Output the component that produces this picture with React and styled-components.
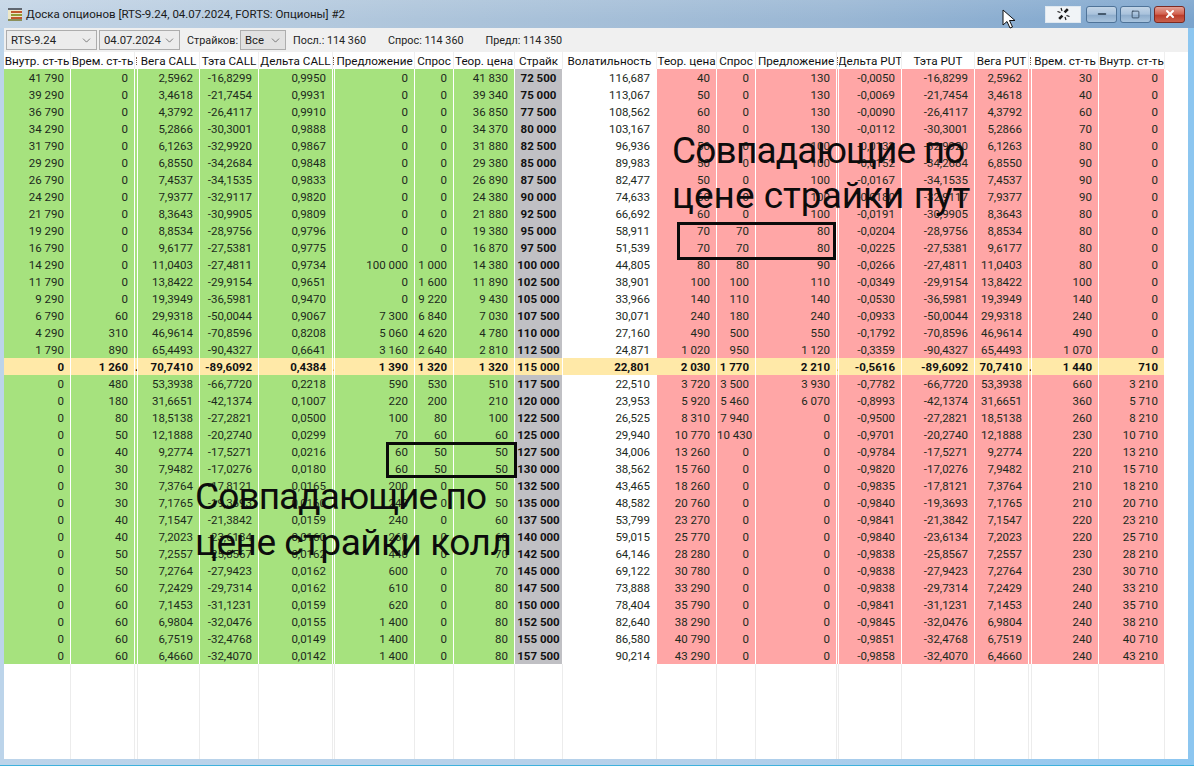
import React from 'react'
import styled, { createGlobalStyle } from 'styled-components'
import { ChevronDown, Minus, Square, X } from 'lucide-react'

const GlobalStyle = createGlobalStyle`
  html, body {
    margin: 0;
    padding: 0;
    overflow: hidden;
    background: #b9d3ea;
  }
  * {
    box-sizing: border-box;
  }
`

const COLUMNS =
  '67px 64px 3px 62px 59px 74px 2px 80px 39px 61px 48px 94px 60px 39px 81px 2px 63px 73px 54px 3px 67px 66px'

const RAW = `41 790|0|2,5962|-16,8299|0,9950|0|0|41 830|72 500|116,687|40|0|130|-0,0050|30|0
39 290|0|3,4618|-21,7454|0,9931|0|0|39 340|75 000|113,067|50|0|130|-0,0069|40|0
36 790|0|4,3792|-26,4117|0,9910|0|0|36 850|77 500|108,562|60|0|130|-0,0090|60|0
34 290|0|5,2866|-30,3001|0,9888|0|0|34 370|80 000|103,167|80|0|130|-0,0112|70|0
31 790|0|6,1263|-32,9920|0,9867|0|0|31 880|82 500|96,936|50|0|100|-0,0133|80|0
29 290|0|6,8550|-34,2684|0,9848|0|0|29 380|85 000|89,983|50|0|100|-0,0152|90|0
26 790|0|7,4537|-34,1535|0,9833|0|0|26 890|87 500|82,477|50|0|100|-0,0167|90|0
24 290|0|7,9377|-32,9117|0,9820|0|0|24 380|90 000|74,633|60|0|100|-0,0180|90|0
21 790|0|8,3643|-30,9905|0,9809|0|0|21 880|92 500|66,692|60|0|100|-0,0191|80|0
19 290|0|8,8534|-28,9756|0,9796|0|0|19 380|95 000|58,911|70|70|80|-0,0204|80|0
16 790|0|9,6177|-27,5381|0,9775|0|0|16 870|97 500|51,539|70|70|80|-0,0225|80|0
14 290|0|11,0403|-27,4811|0,9734|100 000|1 000|14 380|100 000|44,805|80|80|90|-0,0266|80|0
11 790|0|13,8422|-29,9154|0,9651|0|1 600|11 890|102 500|38,901|100|100|110|-0,0349|100|0
9 290|0|19,3949|-36,5981|0,9470|0|9 220|9 430|105 000|33,966|140|110|140|-0,0530|140|0
6 790|60|29,9318|-50,0044|0,9067|7 300|6 840|7 030|107 500|30,071|240|180|240|-0,0933|240|0
4 290|310|46,9614|-70,8596|0,8208|5 060|4 620|4 780|110 000|27,160|490|500|550|-0,1792|490|0
1 790|890|65,4493|-90,4327|0,6641|3 160|2 640|2 810|112 500|24,871|1 020|950|1 120|-0,3359|1 070|0
0|1 260|70,7410|-89,6092|0,4384|1 390|1 320|1 320|115 000|22,801|2 030|1 770|2 210|-0,5616|1 440|710
0|480|53,3938|-66,7720|0,2218|590|530|510|117 500|22,510|3 720|3 500|3 930|-0,7782|660|3 210
0|180|31,6651|-42,1374|0,1007|220|200|210|120 000|23,953|5 920|5 460|6 070|-0,8993|360|5 710
0|80|18,5138|-27,2821|0,0500|100|80|100|122 500|26,525|8 310|7 940|0|-0,9500|260|8 210
0|50|12,1888|-20,2740|0,0299|70|60|60|125 000|29,940|10 770|10 430|0|-0,9701|230|10 710
0|40|9,2774|-17,5271|0,0216|60|50|50|127 500|34,006|13 260|0|0|-0,9784|220|13 210
0|30|7,9482|-17,0276|0,0180|60|50|50|130 000|38,562|15 760|0|0|-0,9820|210|15 710
0|30|7,3764|-17,8121|0,0165|200|0|50|132 500|43,465|18 260|0|0|-0,9835|210|18 210
0|30|7,1765|-19,3693|0,0160|240|0|50|135 000|48,582|20 760|0|0|-0,9840|210|20 710
0|40|7,1547|-21,3842|0,0159|240|0|60|137 500|53,799|23 270|0|0|-0,9841|220|23 210
0|40|7,2023|-23,6134|0,0160|260|0|60|140 000|59,015|25 770|0|0|-0,9840|220|25 710
0|50|7,2557|-25,8567|0,0162|440|0|70|142 500|64,146|28 280|0|0|-0,9838|230|28 210
0|50|7,2764|-27,9423|0,0162|600|0|70|145 000|69,122|30 780|0|0|-0,9838|230|30 710
0|60|7,2429|-29,7314|0,0162|610|0|80|147 500|73,888|33 290|0|0|-0,9838|240|33 210
0|60|7,1453|-31,1231|0,0159|620|0|80|150 000|78,404|35 790|0|0|-0,9841|240|35 710
0|60|6,9804|-32,0476|0,0155|1 400|0|80|152 500|82,640|38 290|0|0|-0,9845|240|38 210
0|60|6,7519|-32,4768|0,0149|1 400|0|80|155 000|86,580|40 790|0|0|-0,9851|240|40 710
0|60|6,4660|-32,4070|0,0142|1 400|0|80|157 500|90,214|43 290|0|0|-0,9858|240|43 210`

const rows = RAW.split('\n').map((line) => line.split('|'))

// null marks the squeezed columns, they only show a sliver of their title
const HEADERS = [
  'Внутр. ст-ть', 'Врем. ст-ть', null, 'Вега CALL', 'Тэта CALL', 'Дельта CALL', null,
  'Предложение', 'Спрос', 'Теор. цена', 'Страйк', 'Волатильность', 'Теор. цена', 'Спрос',
  'Предложение', null, 'Дельта PUT', 'Тэта PUT', 'Вега PUT', null, 'Врем. ст-ть', 'Внутр. ст-ть',
]

const tones = {
  call: '#a6e27e',
  put: '#ffa6a6',
  strike: '#c0c0c4',
  atm: '#ffe9a8',
  plain: '#ffffff',
}

const Window = styled.div`
  position: relative;
  width: 1194px;
  height: 766px;
  display: flex;
  flex-direction: column;
  padding: 0 6px 6px 4px;
  font-family: Roboto, 'Liberation Sans', sans-serif;
  font-size: 11.5px;
  color: #111;
  background: linear-gradient(to right, #bcd4ea 0%, #b4d0ea 60%, #8cc6f0 100%);
  border-bottom: 1px solid #3fb1dc;
`

const TitleBar = styled.div`
  flex: 0 0 28px;
  margin: 0 -6px 0 -4px;
  padding: 0 9px 0 8px;
  display: flex;
  align-items: center;
  background:
    linear-gradient(to bottom, rgba(255, 255, 255, 0.1), rgba(255, 255, 255, 0) 70%),
    linear-gradient(to right, #c4d5e6 0%, #aec5db 35%, #9ab7d4 70%, #7ba4cd 100%);
`

const AppIcon = styled.svg`
  flex: none;
  width: 14px;
  height: 13px;
  margin-right: 4px;
`

const Title = styled.span`
  font-size: 11.5px;
  color: #1a1a1a;
  white-space: nowrap;
`

const Spacer = styled.div`
  flex: 1;
`

const PinButton = styled.div`
  width: 36px;
  height: 17px;
  margin-right: 5px;
  display: flex;
  align-items: center;
  justify-content: center;
  background: #f1f4f7;
  border: 1px solid #dfe8f0;
  color: #1a1a1a;
`

const CaptionButton = styled.div`
  width: 31px;
  height: 17px;
  margin-left: ${(p) => p.$gap}px;
  display: flex;
  align-items: center;
  justify-content: center;
  border: 1px solid ${(p) => (p.$close ? '#7c2a22' : '#4f7398')};
  border-radius: 3px;
  color: ${(p) => (p.$close ? '#fff' : '#26384b')};
  background: ${(p) =>
    p.$close
      ? 'linear-gradient(to bottom, #e2a196 0%, #d2614f 48%, #bb3c2a 55%, #c9604c 100%)'
      : 'linear-gradient(to bottom, #c3d5e7 0%, #a9c2dc 48%, #8fadcc 55%, #a9c4de 100%)'};
`

const Client = styled.div`
  flex: 1;
  display: flex;
  flex-direction: column;
  background: #fff;
  min-height: 0;
`

const Toolbar = styled.div`
  flex: 0 0 24px;
  display: flex;
  align-items: center;
  padding: 0 0 0 2px;
  background: #f0f0f0;
`

const Combo = styled.div`
  width: ${(p) => p.$width}px;
  height: 20px;
  margin-left: ${(p) => p.$left || 0}px;
  padding: 0 3px 0 4px;
  display: flex;
  align-items: center;
  justify-content: space-between;
  font-size: 11.3px;
  color: #222;
  background: ${(p) => (p.$pressed ? '#e1e1e1' : '#ececec')};
  border: 1px solid #adadad;
`

const Label = styled.span`
  margin-left: ${(p) => p.$left}px;
  white-space: nowrap;
  font-size: 10.8px;
  color: #222;
`

const Row = styled.div`
  display: grid;
  grid-template-columns: ${COLUMNS};
  height: ${(p) => p.$height}px;
`

const HeaderCell = styled.div`
  overflow: hidden;
  white-space: nowrap;
  display: flex;
  align-items: center;
  justify-content: center;
  font-size: 11.7px;
  color: #111;
  background: #fff;
  border-right: 1px solid #efefef;
`

const HeaderSliver = styled.div`
  display: flex;
  justify-content: center;
  align-items: center;
  background: #fff;
  &::after {
    content: '';
    width: 1px;
    height: 8px;
    border-left: 1px dotted #7a5a48;
  }
`

const Cell = styled.div`
  overflow: hidden;
  white-space: nowrap;
  line-height: 18px;
  text-align: ${(p) => (p.$center ? 'center' : 'right')};
  padding-right: ${(p) => (p.$center || p.$narrow ? 0 : 6)}px;
  font-weight: ${(p) => (p.$bold ? 700 : 400)};
  color: ${(p) => (p.$bold ? '#111' : '#1c2a1c')};
  background: ${(p) => tones[p.$tone]};
  border-right: 1px solid ${(p) => (p.$plain ? 'transparent' : '#fff')};
`

const EmptyCell = styled.div`
  border-right: 1px solid #ececec;
`

const Frame = styled.div`
  position: absolute;
  left: ${(p) => p.$x}px;
  top: ${(p) => p.$y}px;
  width: ${(p) => p.$w}px;
  height: ${(p) => p.$h}px;
  border: 3px solid #0a0a0a;
`

const Note = styled.div`
  position: absolute;
  left: ${(p) => p.$x}px;
  top: ${(p) => p.$y}px;
  font-size: 37px;
  line-height: ${(p) => p.$lh}px;
  color: #0c0c0c;
  white-space: nowrap;
`

const NoteLine = styled.div`
  letter-spacing: ${(p) => p.$track}px;
`

const Cursor = styled.svg`
  position: absolute;
  left: 1002px;
  top: 9px;
  width: 15px;
  height: 20px;
`

const BrokenLink = () => (
  <svg width='15' height='14' viewBox='0 0 15 14' fill='none' stroke='currentColor'>
    <path d='M3.2 11.8 L6.4 8.6' strokeWidth='2.6' />
    <path d='M8.6 5.4 L11.8 2.2' strokeWidth='2.6' />
    <path d='M5 1 L6 4 M1.5 4.5 L4.5 5.5 M13.5 9.5 L10.5 8.5 M10 13 L9 10' strokeWidth='1.2' />
  </svg>
)

const DataRow = ({ values, index }) => {
  const [intr, time, vega, theta, delta, offer, bid, theor, strike, vol, pTheor, pBid, pOffer, pDelta, pTime, pIntr] =
    values
  const atm = index === 17
  const call = atm ? 'atm' : 'call'
  const put = atm ? 'atm' : 'put'
  const gap = atm ? '.' : ''
  return (
    <Row $height={17}>
      <Cell $tone={call} $bold={atm}>{intr}</Cell>
      <Cell $tone={call} $bold={atm}>{time}</Cell>
      <Cell $tone={call} $narrow $bold={atm}>{gap}</Cell>
      <Cell $tone={call} $bold={atm}>{vega}</Cell>
      <Cell $tone={call} $bold={atm}>{theta}</Cell>
      <Cell $tone={call} $bold={atm}>{delta}</Cell>
      <Cell $tone={call} $narrow $bold={atm}>{gap}</Cell>
      <Cell $tone={call} $bold={atm}>{offer}</Cell>
      <Cell $tone={call} $bold={atm}>{bid}</Cell>
      <Cell $tone={call} $bold={atm}>{theor}</Cell>
      <Cell $tone={atm ? 'atm' : 'strike'} $center $bold>{strike}</Cell>
      <Cell $tone={atm ? 'atm' : 'plain'} $plain $bold={atm}>{vol}</Cell>
      <Cell $tone={put} $bold={atm}>{pTheor}</Cell>
      <Cell $tone={put} $bold={atm}>{pBid}</Cell>
      <Cell $tone={put} $bold={atm}>{pOffer}</Cell>
      <Cell $tone={put} $narrow $bold={atm}>{gap}</Cell>
      <Cell $tone={put} $bold={atm}>{pDelta}</Cell>
      <Cell $tone={put} $bold={atm}>{theta}</Cell>
      <Cell $tone={put} $bold={atm}>{vega}</Cell>
      <Cell $tone={put} $narrow $bold={atm}>{gap}</Cell>
      <Cell $tone={put} $bold={atm}>{pTime}</Cell>
      <Cell $tone={put} $bold={atm}>{pIntr}</Cell>
    </Row>
  )
}

const App = () => {
  return (
    <Window>
      <GlobalStyle />
      <TitleBar>
        <AppIcon viewBox='0 0 14 13'>
          <rect x='0' y='0' width='14' height='13' fill='#eee8c8' />
          <rect x='0' y='0' width='14' height='2' fill='#5f6670' />
          <rect x='3' y='3' width='11' height='2' fill='#c0562f' />
          <rect x='3' y='6' width='11' height='2' fill='#8f9a35' />
          <rect x='3' y='9' width='11' height='2' fill='#c0562f' />
          <rect x='0' y='11' width='14' height='2' fill='#8b8f5a' />
        </AppIcon>
        <Title>Доска опционов [RTS-9.24, 04.07.2024, FORTS: Опционы] #2</Title>
        <Spacer />
        <PinButton>
          <BrokenLink />
        </PinButton>
        <CaptionButton $gap={0}>
          <Minus size={12} strokeWidth={3} />
        </CaptionButton>
        <CaptionButton $gap={3}>
          <Square size={9} strokeWidth={2} />
        </CaptionButton>
        <CaptionButton $gap={3} $close>
          <X size={12} strokeWidth={4} />
        </CaptionButton>
      </TitleBar>
      <Client>
        <Toolbar>
          <Combo $width={91}>
            RTS-9.24
            <ChevronDown size={13} strokeWidth={1} />
          </Combo>
          <Combo $width={81} $left={2}>
            04.07.2024
            <ChevronDown size={13} strokeWidth={1} />
          </Combo>
          <Label $left={7}>Страйков:</Label>
          <Combo $width={46} $left={2} $pressed>
            Все
            <ChevronDown size={13} strokeWidth={1} />
          </Combo>
          <Label $left={7}>Посл.: 114 360</Label>
          <Label $left={22}>Спрос: 114 360</Label>
          <Label $left={22}>Предл: 114 350</Label>
        </Toolbar>
        <Row $height={17}>
          {HEADERS.map((name, i) =>
            name ? <HeaderCell key={i}>{name}</HeaderCell> : <HeaderSliver key={i} />
          )}
        </Row>
        {rows.map((values, i) => (
          <DataRow key={values[8]} values={values} index={i} />
        ))}
        <Row $height={95}>
          {HEADERS.map((name, i) => (
            <EmptyCell key={i} />
          ))}
        </Row>
      </Client>
      <Frame $x={677} $y={222} $w={159} $h={38} />
      <Frame $x={386} $y={442} $w={131} $h={36} />
      <Note $x={672} $y={128} $lh={45}>
        <NoteLine $track={-0.8}>Совпадающие по</NoteLine>
        <NoteLine $track={0}>цене страйки пут</NoteLine>
      </Note>
      <Note $x={195} $y={474} $lh={46}>
        <NoteLine $track={-0.9}>Совпадающие по</NoteLine>
        <NoteLine $track={-0.5}>цене страйки колл</NoteLine>
      </Note>
      <Cursor viewBox='0 0 15 20'>
        <path d='M1 1 L1 16 L5 12.5 L8 19 L10.5 18 L7.5 11.5 L13 11.5 Z' fill='#fff' stroke='#111' strokeWidth='1' />
      </Cursor>
    </Window>
  )
}

export default App
